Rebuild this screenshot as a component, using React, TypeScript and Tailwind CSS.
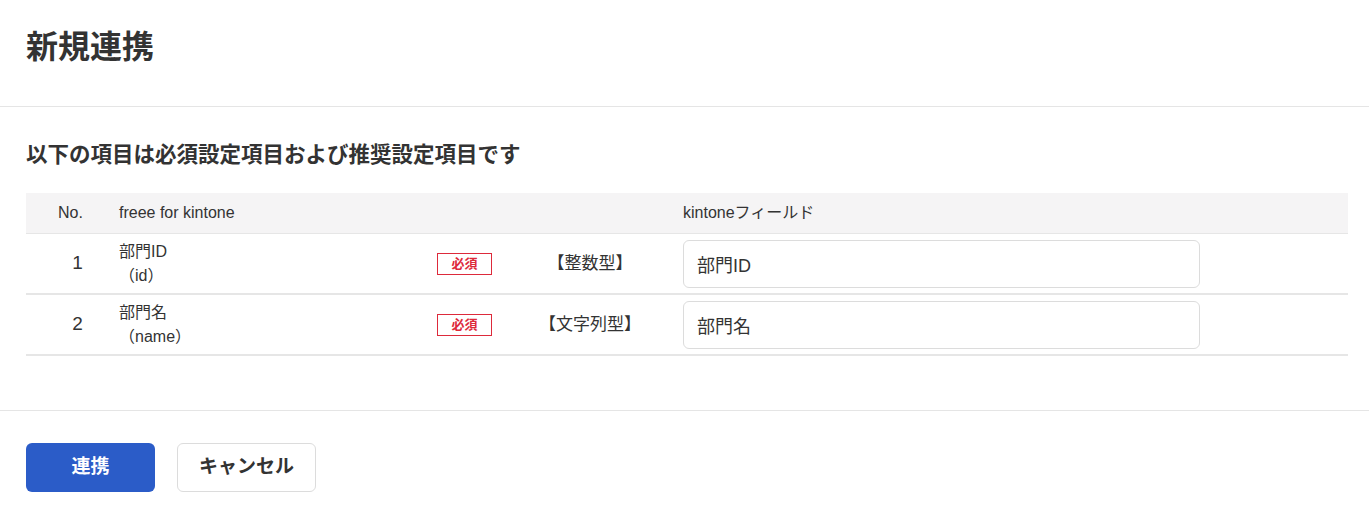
import React from 'react';

const font = { fontFamily: '"Liberation Sans", "Noto Sans CJK JP", sans-serif' };

interface Row {
  no: number;
  label: string;
  code: string;
  type: string;
  value: string;
}

const rows: Row[] = [
  { no: 1, label: '部門ID', code: '（id）', type: '【整数型】', value: '部門ID' },
  { no: 2, label: '部門名', code: '（name）', type: '【文字列型】', value: '部門名' },
];

const FieldRow: React.FC<{ row: Row }> = ({ row }) => (
  <div className="flex h-[61px] items-center border-b-2 border-[#e6e6e6]">
    <div className="w-[93px] pl-[10px] text-center text-[19px]">{row.no}</div>
    <div className="w-[318px] text-[16px] leading-6">
      <div>{row.label}</div>
      <div>{row.code}</div>
    </div>
    <div className="w-[55px]">
      <span className="flex h-[22px] w-[55px] items-center justify-center border border-[#dd2a3b] text-[13px] font-bold text-[#dd2a3b]">
        必須
      </span>
    </div>
    <div className="w-[191px] pl-[5px] text-center text-[17px]">{row.type}</div>
    <div className="w-[517px]">
      <input
        readOnly
        value={row.value}
        className="h-[48px] w-full rounded-[6px] border border-[#dcdcdc] bg-white px-[13px] text-[18px] text-[#333] outline-none"
        style={font}
      />
    </div>
  </div>
);

export default function App() {
  return (
    <div className="min-h-[506px] bg-white text-[#333]" style={font}>
      {/* Title */}
      <header className="h-[107px] border-b border-[#e5e5e5] px-[26px] pt-[23px]">
        <h1 className="text-[32px] font-bold leading-[48px]">新規連携</h1>
      </header>

      {/* Mapping table */}
      <main className="px-[26px] pt-[32px] pb-[54px]">
        <h2 className="text-[21.5px] font-bold leading-[32px]">以下の項目は必須設定項目および推奨設定項目です</h2>

        <div className="mt-[22px] w-[1322px]">
          <div className="flex h-[41px] items-center border-b border-[#e6e6e6] bg-[#f5f4f5] text-[16px]">
            <div className="w-[93px] pl-[32px]">No.</div>
            <div className="w-[564px]">freee for kintone</div>
            <div>kintoneフィールド</div>
          </div>
          {rows.map((r) => (
            <FieldRow key={r.no} row={r} />
          ))}
        </div>
      </main>

      {/* Actions */}
      <footer className="flex gap-[22px] border-t border-[#e5e5e5] px-[26px] pt-[32px] pb-[14px]">
        <button className="h-[49px] w-[129px] rounded-[6px] bg-[#2b5cc8] text-[19px] font-bold text-white">
          連携
        </button>
        <button className="h-[49px] w-[139px] rounded-[6px] border border-[#dcdcdc] bg-white text-[19px] font-bold text-[#333]">
          キャンセル
        </button>
      </footer>
    </div>
  );
}
